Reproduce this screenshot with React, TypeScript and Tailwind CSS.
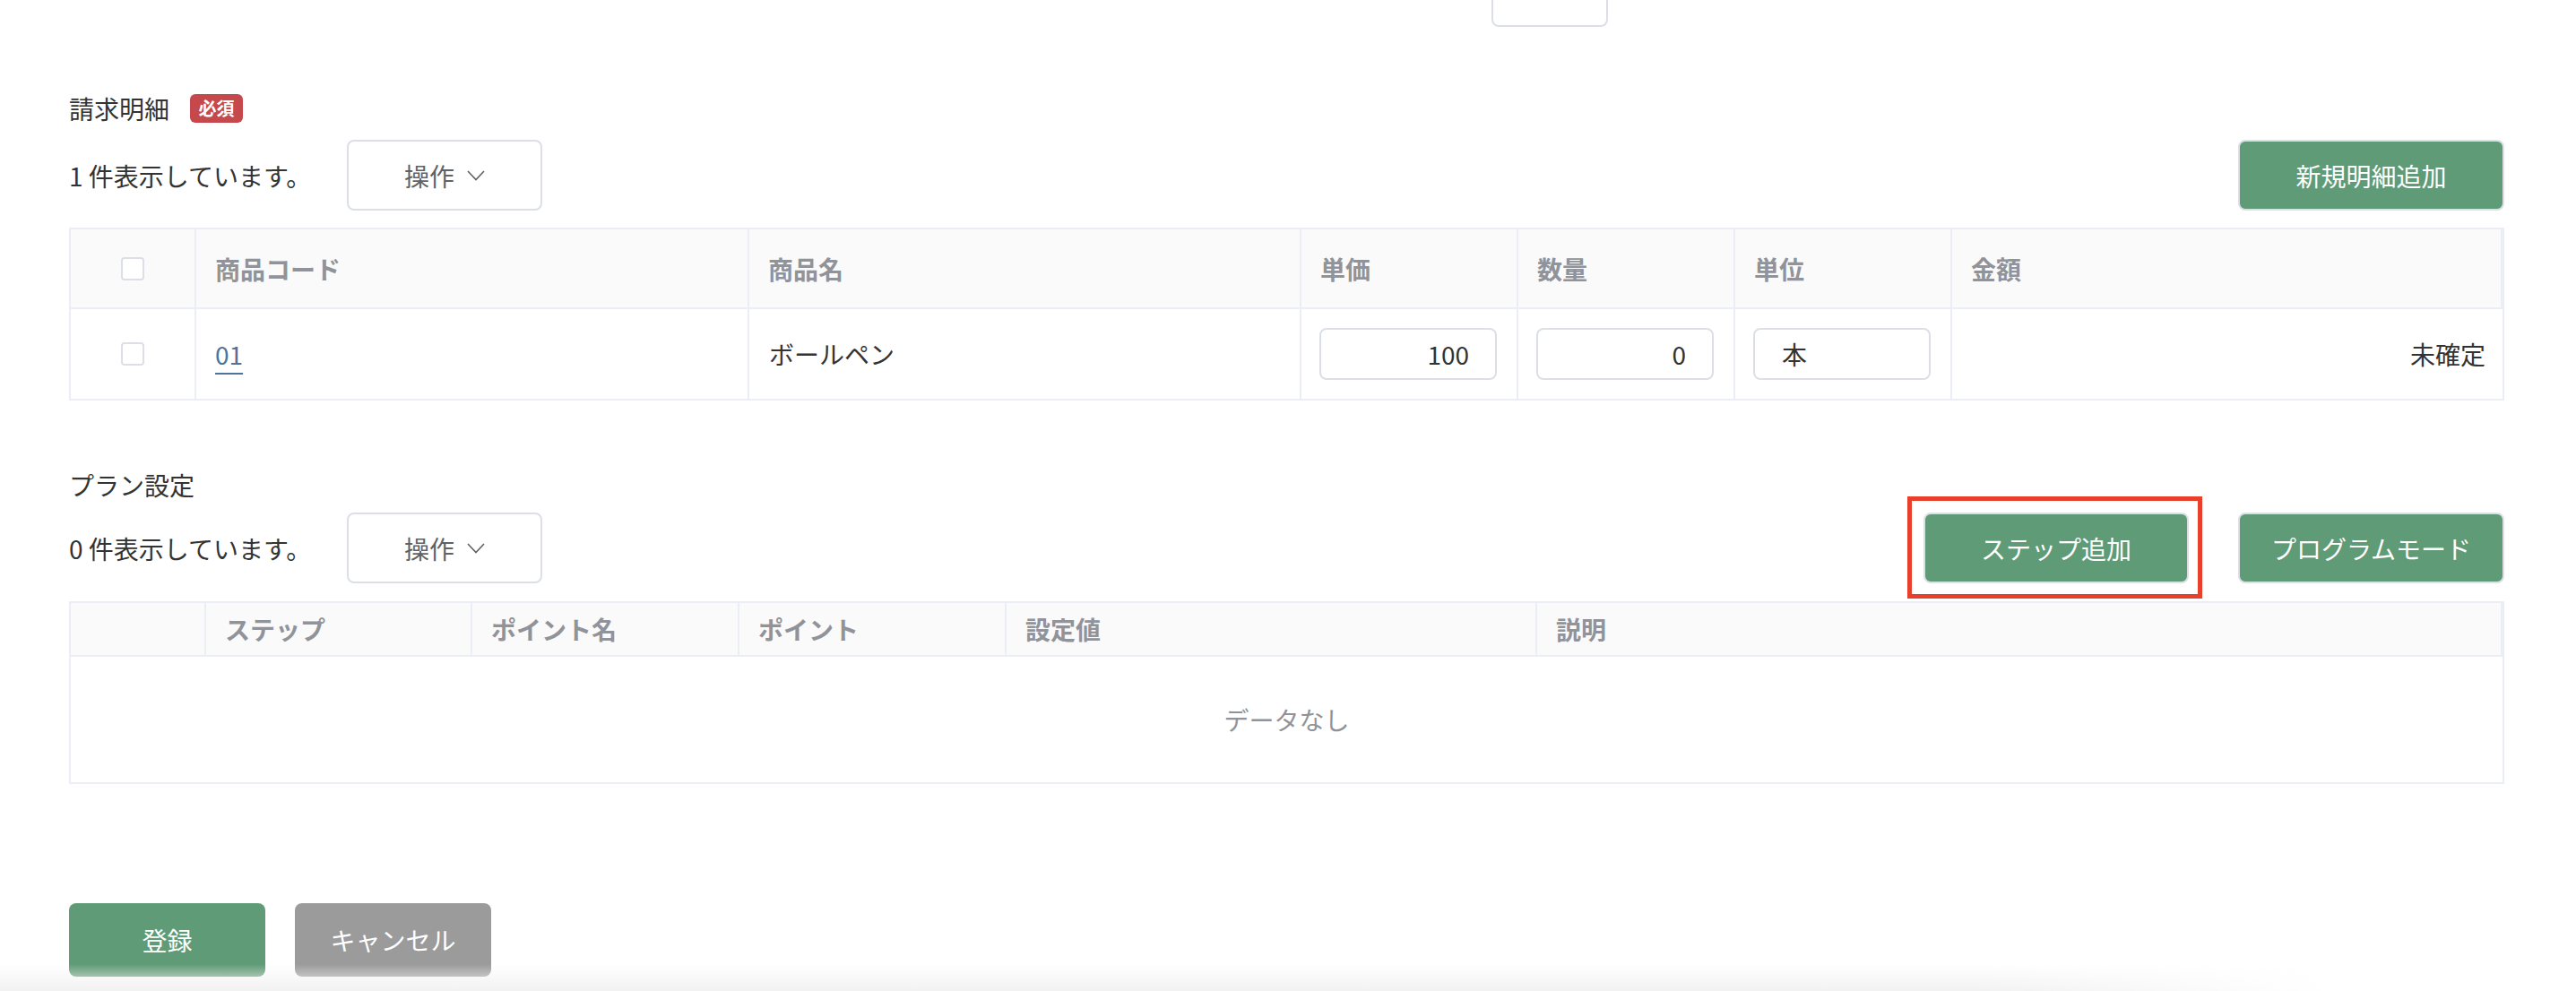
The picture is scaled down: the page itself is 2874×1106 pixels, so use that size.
import React from "react";

const font = { fontFamily: '"Noto Sans CJK JP", "Noto Sans", sans-serif' };

function Chevron() {
  return (
    <svg width="20" height="12" viewBox="0 0 20 12" fill="none" className="ml-[14px]">
      <polyline points="1,1 10,10.5 19,1" stroke="#606266" strokeWidth="1.6" fill="none" />
    </svg>
  );
}

function OpButton() {
  return (
    <button className="flex items-center justify-center w-[218px] h-[79px] border-2 border-[#dcdfe6] rounded-lg bg-white text-[28px] text-[#606266]">
      操作
      <Chevron />
    </button>
  );
}

function GreenButton({ label, w = "w-[297px]" }: { label: string; w?: string }) {
  return (
    <button
      className={`${w} h-[79px] border-2 border-[#dcdfe6] rounded-lg bg-[#5f9b76] text-white text-[28px]`}
    >
      {label}
    </button>
  );
}

function Checkbox() {
  return <span className="block w-[26px] h-[26px] border-2 border-[#dcdfe6] rounded-[4px] bg-white" />;
}

function NumInput({ value, align }: { value: string; align: "left" | "right" }) {
  return (
    <div
      className={`w-[198px] h-[58px] border-2 border-[#dcdfe6] rounded-lg flex items-center text-[28px] text-[#333] ${
        align === "right" ? "justify-end pr-[29px]" : "justify-start pl-[30px]"
      }`}
    >
      {value}
    </div>
  );
}

const headCell = "flex items-center pl-[21px] font-bold text-[28px] text-[#909399] border-r-2 border-[#ebeef5]";

export default function App() {
  const planCols = ["", "ステップ", "ポイント名", "ポイント", "設定値", "説明"];

  return (
    <div className="relative w-[2874px] h-[1106px] bg-white overflow-hidden" style={font}>
      {/* cut-off field at the top */}
      <div className="ml-[1664px] w-[130px] h-[30px] border-2 border-t-0 border-[#dcdfe6] rounded-b-lg" />

      <div className="pl-[77px] pr-[80px]">
        {/* 請求明細 */}
        <div className="mt-[73px] h-[36px] flex items-center gap-[23px]">
          <span className="text-[28px] text-[#333]">請求明細</span>
          <span className="w-[59px] h-[32px] rounded-md bg-[#c4484c] text-white font-bold text-[20px] flex items-center justify-center">
            必須
          </span>
        </div>

        <div className="mt-[17px] h-[79px] flex items-center">
          <span className="text-[28px] text-[#333] w-[310px]">1 件表示しています。</span>
          <OpButton />
          <div className="flex-1" />
          <GreenButton label="新規明細追加" />
        </div>

        <div className="mt-[19px] border-2 border-[#ebeef5]">
          <div className="grid grid-cols-[140px_617px_616px_242px_242px_242px_1fr] h-[89px] bg-[#fafafa] border-b-2 border-[#ebeef5]">
            <div className="flex items-center justify-center border-r-2 border-[#ebeef5]">
              <Checkbox />
            </div>
            <div className={headCell}>商品コード</div>
            <div className={headCell}>商品名</div>
            <div className={headCell}>単価</div>
            <div className={headCell}>数量</div>
            <div className={headCell}>単位</div>
            <div className={`${headCell} border-r-0`}>金額</div>
          </div>
          <div className="grid grid-cols-[140px_617px_616px_242px_242px_242px_1fr] h-[100px] text-[28px] text-[#333]">
            <div className="flex items-center justify-center border-r-2 border-[#ebeef5]">
              <Checkbox />
            </div>
            <div className="flex items-center pl-[21px] border-r-2 border-[#ebeef5]">
              <span className="text-[#4f7399] underline decoration-2 underline-offset-[9px]">01</span>
            </div>
            <div className="flex items-center pl-[22px] border-r-2 border-[#ebeef5]">ボールペン</div>
            <div className="flex items-center pl-[20px] border-r-2 border-[#ebeef5]">
              <NumInput value="100" align="right" />
            </div>
            <div className="flex items-center pl-[20px] border-r-2 border-[#ebeef5]">
              <NumInput value="0" align="right" />
            </div>
            <div className="flex items-center pl-[20px] border-r-2 border-[#ebeef5]">
              <NumInput value="本" align="left" />
            </div>
            <div className="flex items-center justify-end pr-[19px]">未確定</div>
          </div>
        </div>

        {/* プラン設定 */}
        <div className="mt-[76px] h-[36px] flex items-center">
          <span className="text-[28px] text-[#333]">プラン設定</span>
        </div>

        <div className="mt-[13px] h-[79px] flex items-center">
          <span className="text-[28px] text-[#333] w-[310px]">0 件表示しています。</span>
          <OpButton />
          <div className="flex-1" />
          <div className="relative">
            <GreenButton label="ステップ追加" w="w-[296px]" />
            <div className="absolute -left-[18px] -right-[15px] -top-[18px] -bottom-[17px] border-[5px] border-[#e8402a] pointer-events-none" />
          </div>
          <div className="w-[55px]" />
          <GreenButton label="プログラムモード" />
        </div>

        <div className="mt-[20px] border-2 border-[#ebeef5]">
          <div className="grid grid-cols-[151px_297px_298px_298px_592px_1fr] h-[60px] bg-[#fafafa] border-b-2 border-[#ebeef5]">
            {planCols.map((c, i) => (
              <div key={i} className={i === planCols.length - 1 ? `${headCell} border-r-0` : headCell}>
                {c}
              </div>
            ))}
          </div>
          <div className="h-[140px] flex items-center justify-center text-[28px] text-[#909399]">データなし</div>
        </div>

        <div className="mt-[133px] flex gap-[33px]">
          <button className="w-[219px] h-[82px] rounded-lg bg-[#5f9b76] text-white text-[28px]">登録</button>
          <button className="w-[219px] h-[82px] rounded-lg bg-[#9b9b9b] text-white text-[28px]">キャンセル</button>
        </div>
      </div>

      {/* footer shadow */}
      <div className="absolute left-0 bottom-0 w-[2600px] h-[30px] bg-gradient-to-b from-transparent to-[#f2f2f2] [mask-image:linear-gradient(to_right,black_85%,transparent)] pointer-events-none" />
    </div>
  );
}
